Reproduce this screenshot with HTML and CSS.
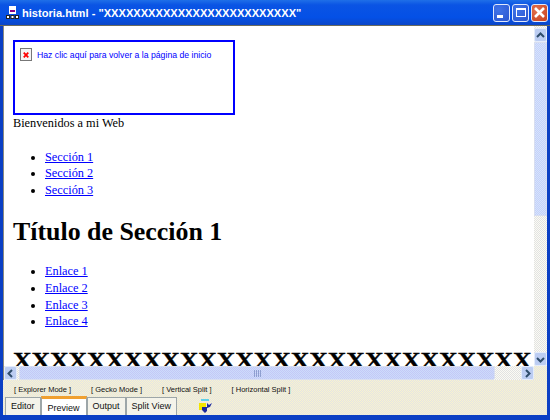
FILE: index.html
```html
<!DOCTYPE html>
<html lang="es">
<head>
    <meta charset="UTF-8">
    <title>historia.html</title>
    <link rel="stylesheet" href="styles.css">
</head>
<body>
<div class="window">
    <!-- Barra de titulo -->
    <div class="titlebar">
        <svg class="app-icon" width="13" height="13" viewBox="0 0 13 13">
            <rect x="3" y="0" width="7" height="8" fill="#fff"/>
            <rect x="4" y="4" width="5" height="2" fill="#808"/>
            <rect x="0.500" y="9.500" width="3" height="3" fill="#fff" stroke="#222"/>
            <rect x="5" y="9.500" width="3" height="3" fill="#fff" stroke="#222"/>
            <rect x="9.500" y="9.500" width="3" height="3" fill="#fff" stroke="#222"/>
        </svg>
        <span class="title">historia.html - "XXXXXXXXXXXXXXXXXXXXXXXXXX"</span>
        <div class="win-btn"><span class="min-glyph"></span></div>
        <div class="win-btn"><span class="max-glyph"></span></div>
        <div class="win-btn close">
            <svg width="13" height="13" viewBox="0 0 13 13"><path d="M2 2l9 9M11 2l-9 9" stroke="#fff" stroke-width="2.6"/></svg>
        </div>
    </div>

    <div class="middle">
        <!-- Contenido -->
        <div class="page">
            <a class="banner" href="#">
                <span class="broken"><svg width="10" height="10" viewBox="0 0 11 11"><path d="M3 3l5 5M8 3l-5 5" stroke="#f00" stroke-width="2"/></svg></span>
                <span>Haz clic aquí para volver a la página de inicio</span>
            </a>
            <div class="welcome">Bienvenidos a mi Web</div>
            <ul class="links first">
                <li><a href="#">Sección 1</a></li>
                <li><a href="#">Sección 2</a></li>
                <li><a href="#">Sección 3</a></li>
            </ul>
            <h1>Título de Sección 1</h1>
            <ul class="links">
                <li><a href="#">Enlace 1</a></li>
                <li><a href="#">Enlace 2</a></li>
                <li><a href="#">Enlace 3</a></li>
                <li><a href="#">Enlace 4</a></li>
            </ul>
            <h1 class="filler">XXXXXXXXXXXXXXXXXXXXXXXXXXXX</h1>
        </div>
        <!-- Scroll vertical -->
        <div class="vscroll">
            <div class="arrow"><svg width="9" height="7" viewBox="0 0 9 7"><path d="M1 5l3.500-3.500L8 5" fill="none" stroke="#2f4d6b" stroke-width="2"/></svg></div>
            <div class="vthumb"></div>
            <div class="vtrack"></div>
            <div class="arrow"><svg width="9" height="7" viewBox="0 0 9 7"><path d="M1 2l3.500 3.500L8 2" fill="none" stroke="#2f4d6b" stroke-width="2"/></svg></div>
        </div>
        <!-- Scroll horizontal -->
        <div class="hscroll">
            <div class="arrow"><svg width="7" height="9" viewBox="0 0 7 9"><path d="M5 1L1.500 4.500 5 8" fill="none" stroke="#2f4d6b" stroke-width="2"/></svg></div>
            <div class="hthumb"><span class="grip"></span></div>
            <div class="htrack"></div>
            <div class="arrow"><svg width="7" height="9" viewBox="0 0 7 9"><path d="M2 1l3.500 3.500L2 8" fill="none" stroke="#2f4d6b" stroke-width="2"/></svg></div>
        </div>
        <div class="corner"></div>
    </div>

    <!-- Barra inferior -->
    <div class="bottom">
        <div class="modes">
            <span>[ Explorer Mode ]</span>
            <span>[ Gecko Mode ]</span>
            <span>[ Vertical Split ]</span>
            <span>[ Horizontal Split ]</span>
        </div>
        <div class="tabs">
            <div class="tab">Editor</div>
            <div class="tab active">Preview</div>
            <div class="tab">Output</div>
            <div class="tab">Split View</div>
            <svg class="tool-icon" width="14" height="14" viewBox="0 0 14 14">
                <path d="M2 0h8v2H2z" fill="#5fd0e8"/>
                <path d="M0 4h7v7H0z" fill="#f2e600"/>
                <path d="M3 8h5V4l2 2 3-2-2 4-3 1v3l-2 2-3-3z" fill="#1a2a9c"/>
            </svg>
        </div>
    </div>
</div>
</body>
</html>
```

FILE: styles.css
```css
html, body {
    margin: 0;
    padding: 0;
    height: 100%;
    overflow: hidden;
}
.window {
    box-sizing: border-box;
    width: 550px;
    height: 420px;
    display: flex;
    flex-direction: column;
    background-color: #0b3fc4;
    padding: 0 3px 5px 3px;
}
.titlebar {
    height: 26px;
    margin: 0 -3px;
    padding: 0 2px 0 6px;
    display: flex;
    align-items: center;
    gap: 2px;
    background: linear-gradient(#1f6fe8 0, #0a54e4 5px, #0450e6 70%, #0b46c8 100%);
    border-bottom: 1px solid #6b6b5c;
}
.app-icon {
    flex: none;
}
.title {
    flex: 1;
    font: bold 11.1px "Liberation Sans", Arial, sans-serif;
    color: #fff;
    padding-left: 1px;
    white-space: nowrap;
}
.win-btn {
    width: 17px;
    height: 18px;
    box-sizing: border-box;
    border: 1px solid #dfe8fb;
    border-radius: 3px;
    background: radial-gradient(circle at 30% 30%, #3f73e8, #2a55cf);
    display: flex;
    align-items: center;
    justify-content: center;
}
.close {
    background: radial-gradient(circle at 30% 30%, #e2714f, #c8401c);
}
.min-glyph {
    width: 6px;
    height: 3px;
    background-color: #fff;
    margin: 7px 4px 0 0;
}
.max-glyph {
    width: 10px;
    height: 9px;
    box-sizing: border-box;
    border: 1px solid #fff;
    border-top-width: 2px;
}
.middle {
    flex: none;
    height: 354px;
    display: grid;
    grid-template-columns: 1fr 13px;
    grid-template-rows: 1fr 14px;
    background-color: #fff;
    border-left: 1px solid #8a8a80;
}
.page {
    overflow: hidden;
    padding: 14px 0 0 9px;
    font: 12.3px/16.6px "Liberation Serif", "Times New Roman", serif;
    color: #000;
    background-color: #fff;
}
.banner {
    box-sizing: border-box;
    display: flex;
    gap: 5px;
    width: 222px;
    height: 75px;
    border: 2px solid #00f;
    padding: 6px 0 0 5px;
    font: 8.7px/14px "Liberation Sans", Arial, sans-serif;
    color: #00f;
    text-decoration: none;
    white-space: nowrap;
}
.broken {
    box-sizing: border-box;
    width: 12px;
    height: 13px;
    border: 1px solid #777;
    display: flex;
    align-items: center;
    justify-content: center;
    background-color: #f4f4f4;
}
.links {
    margin: 15px 0 16px;
    padding-left: 32px;
}
.links.first {
    margin-top: 17px;
}
.links a {
    color: #00f;
}
h1 {
    margin: 18px 0 15px;
    font-size: 25.9px;
    line-height: 32px;
    font-weight: bold;
}
.filler {
    margin: 23px 0 0;
    white-space: nowrap;
    font-size: 23px;
    line-height: 16px;
    -webkit-text-stroke: 0.4px #000;
    transform: scaleX(1.115);
    transform-origin: left;
}
.vscroll {
    display: flex;
    flex-direction: column;
    padding-top: 2px;
    background: repeating-conic-gradient(#fbfbf4 0 25%, #e2e2e2 0 50%) 0 0/2px 2px;
}
.arrow {
    flex: none;
    box-sizing: border-box;
    width: 13px;
    height: 14px;
    border: 1px solid #e4ecfb;
    border-radius: 2px;
    background-color: #bccdf2;
    display: flex;
    align-items: center;
    justify-content: center;
}
.vthumb {
    height: 174px;
    box-sizing: border-box;
    border: 1px solid #d8def0;
    background: repeating-conic-gradient(#c4d0fb 0 25%, #d6e4fb 0 50%) 0 0/2px 2px;
}
.vtrack {
    flex: 1;
}
.hscroll {
    display: flex;
    background: repeating-conic-gradient(#fbfbf4 0 25%, #e2e2e2 0 50%) 0 0/2px 2px;
}
.hthumb {
    width: 476px;
    margin-left: 2px;
    box-sizing: border-box;
    border: 1px solid #d8def0;
    border-radius: 2px;
    background: repeating-conic-gradient(#c4c8f6 0 25%, #ccdcfb 0 50%) 0 0/2px 2px;
    display: flex;
    align-items: center;
    justify-content: center;
}
.grip {
    width: 7px;
    height: 7px;
    background: repeating-linear-gradient(90deg, #8e9fd0 0 1px, transparent 1px 2px);
}
.htrack {
    flex: 1;
}
.corner {
    background: repeating-conic-gradient(#f8f3cf 0 25%, #e4e4e4 0 50%) 0 0/2px 2px;
}
.bottom {
    flex: 1;
    display: flex;
    flex-direction: column;
    background: repeating-conic-gradient(#f8f3cf 0 25%, #e4e4e4 0 50%) 0 0/2px 2px;
    font-family: "Liberation Sans", Arial, sans-serif;
    color: #111;
}
.modes {
    height: 16px;
    display: flex;
    gap: 20px;
    padding: 2px 0 0 11px;
    box-sizing: border-box;
    align-items: center;
    font-size: 7.5px;
    white-space: nowrap;
}
.tabs {
    flex: 1;
    display: flex;
    align-items: flex-end;
    padding-left: 2px;
}
.tab {
    box-sizing: border-box;
    height: 18px;
    padding: 0 5px;
    line-height: 17px;
    font-size: 9px;
    background-color: #f4f3ea;
    border: 1px solid #9da6a8;
    border-bottom: none;
}
.active {
    height: 19px;
    line-height: 19px;
    padding: 0 6px;
    background-color: #fff;
    border-top: 3px solid #f0a030;
}
.tool-icon {
    margin: 0 0 2px 22px;
}
```
